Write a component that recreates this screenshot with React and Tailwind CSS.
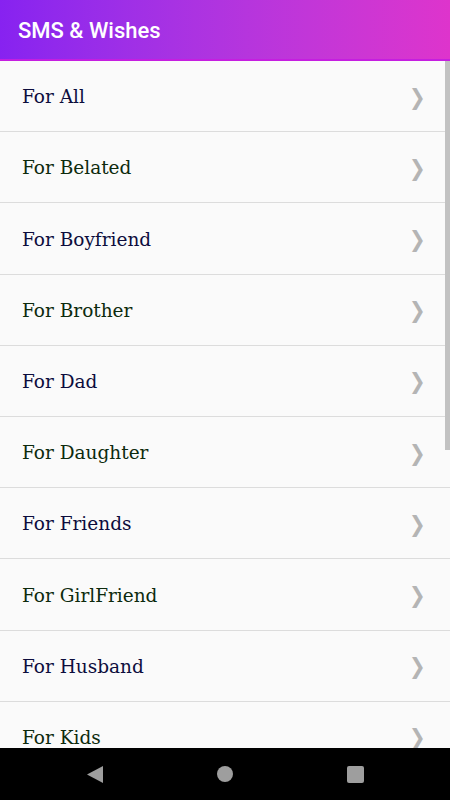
import React from 'react';

const categories = [
  'For All',
  'For Belated',
  'For Boyfriend',
  'For Brother',
  'For Dad',
  'For Daughter',
  'For Friends',
  'For GirlFriend',
  'For Husband',
  'For Kids',
];

const App = () => {
  return (
    <div className="w-[450px] h-[800px] flex flex-col bg-[#fafafa] overflow-hidden">
      {/* toolbar */}
      <div className="h-[61px] shrink-0 flex items-center px-[18px] pt-[2px] bg-gradient-to-r from-[#8722f0] to-[#de34cc] border-b-2 border-[#c51ee0]">
        <h1 className="text-white text-[22px] font-medium font-['Roboto',sans-serif]">SMS &amp; Wishes</h1>
      </div>

      {/* list */}
      <div className="relative flex-1 overflow-hidden">
        <ul>
          {categories.map((name, index) => (
            <li
              key={name}
              className="h-[71.2px] flex items-center justify-between pl-[22px] pr-[24px] pt-[2px] border-b border-[#dcdcdc]"
            >
              <span
                className={`text-[18.5px] font-['DejaVu_Serif',serif] ${index % 2 === 0 ? 'text-[#0d0d3d]' : 'text-[#0d2a0d]'}`}
              >
                {name}
              </span>
              <span className="text-[#b4b4b4] text-[22px] font-['DejaVu_Sans',sans-serif] scale-x-90">❯</span>
            </li>
          ))}
        </ul>
        <div className="absolute right-0 top-0 w-[5px] h-[389px] bg-[#c2c2c2]" />
      </div>

      {/* nav bar */}
      <div className="h-[52px] shrink-0 bg-black flex items-center justify-center gap-[114px]">
        <svg width="16" height="17" viewBox="0 0 16 17">
          <polygon points="16,0 16,17 0,8.5" fill="#9e9e9e" />
        </svg>
        <div className="w-[16px] h-[16px] rounded-full bg-[#9e9e9e]" />
        <div className="w-[17px] h-[17px] rounded-[2px] bg-[#9e9e9e]" />
      </div>
    </div>
  );
};

export default App;
